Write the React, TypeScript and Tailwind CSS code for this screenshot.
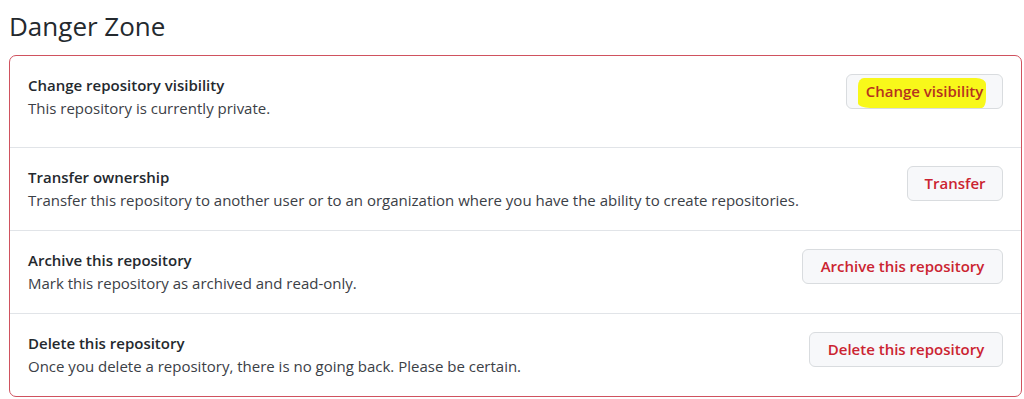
import React from 'react';

interface DangerItem {
  id: string;
  title: string;
  description: string;
  action: string;
  buttonWidth: string;
  highlight?: boolean;
}

const items: DangerItem[] = [
  {
    id: 'visibility',
    title: 'Change repository visibility',
    description: 'This repository is currently private.',
    action: 'Change visibility',
    buttonWidth: 'w-[157px]',
    highlight: true,
  },
  {
    id: 'transfer',
    title: 'Transfer ownership',
    description:
      'Transfer this repository to another user or to an organization where you have the ability to create repositories.',
    action: 'Transfer',
    buttonWidth: 'w-[96px]',
  },
  {
    id: 'archive',
    title: 'Archive this repository',
    description: 'Mark this repository as archived and read-only.',
    action: 'Archive this repository',
    buttonWidth: 'w-[201px]',
  },
  {
    id: 'delete',
    title: 'Delete this repository',
    description: 'Once you delete a repository, there is no going back. Please be certain.',
    action: 'Delete this repository',
    buttonWidth: 'w-[194px]',
  },
];

export default function App() {
  return (
    <div
      className="w-[1024px] h-[399px] bg-white overflow-hidden"
      style={{ fontFamily: '"Open Sans", "Noto Sans", sans-serif' }}
    >
      <h2 className="pl-[9px] pt-[9px] h-[55px] text-[26px] leading-[35px] font-normal text-[#24292e]">
        Danger Zone
      </h2>

      <div className="ml-[9px] w-[1013px] border border-[#d0525f] rounded-[7px]">
        {items.map((item, i) => (
          <div
            key={item.id}
            className={`flex items-start justify-between pl-[18px] pr-[18px] pt-[18px] ${
              i === 0 ? 'pb-[27px]' : 'pb-[18px]'
            } ${i > 0 ? 'border-t border-[#e1e4e8]' : ''}`}
          >
            <div>
              <p className="text-[15px] leading-[23px] font-semibold text-[#24292e]">{item.title}</p>
              <p className="text-[15px] leading-[23px] text-[#3b4046]">{item.description}</p>
            </div>

            <button
              className={`${item.buttonWidth} h-[35px] shrink-0 rounded-[6px] border border-[#d9dcdf] bg-[#f7f8fa] text-[15px] font-semibold flex items-center justify-center`}
            >
              {item.highlight ? (
                <span className="relative">
                  <span className="absolute left-[-8px] right-[-3px] top-[-2px] bottom-[-5px] bg-[#f8f81a] rounded-[6px_10px_4px_12px/8px_6px_10px_5px]" />
                  <span className="relative text-[#b5321f]">{item.action}</span>
                </span>
              ) : (
                <span className="text-[#cb2431]">{item.action}</span>
              )}
            </button>
          </div>
        ))}
      </div>
    </div>
  );
}
